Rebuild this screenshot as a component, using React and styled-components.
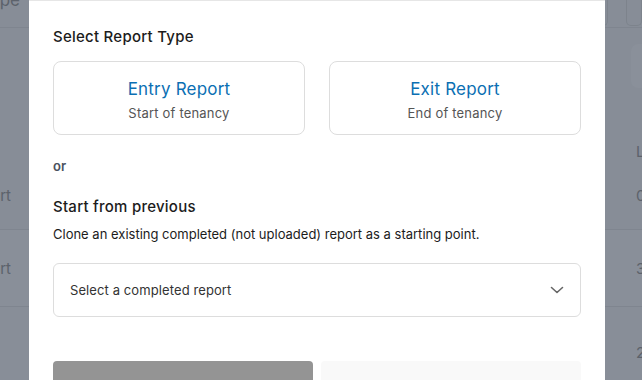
import React from 'react';
import styled, { createGlobalStyle } from 'styled-components';

const Global = createGlobalStyle`
  html, body { margin: 0; padding: 0; }
  body {
    font-family: Inter, "Noto Sans", "Liberation Sans", sans-serif;
    width: 642px;
    height: 380px;
    overflow: hidden;
    background: #878d97;
  }
`;

/* dimmed page behind the dialog */
const Page = styled.div`
  width: 642px;
  height: 380px;
  display: flex;
  flex-direction: column;
  background: #878d97;
  color: #5c626b;
  font-size: 15px;
`;

const Row = styled.div`
  height: ${p => p.h}px;
  display: flex;
  justify-content: space-between;
  align-items: ${p => p.align || 'center'};
  border-bottom: ${p => (p.line ? '1px solid #7f858f' : 'none')};
  background: ${p => p.bg || 'transparent'};
  flex-shrink: 0;
`;

const LeftCell = styled.div`
  width: ${p => p.w || 11}px;
  margin-top: ${p => p.mt || 0}px;
  font-size: ${p => p.fs || 15}px;
  display: flex;
  justify-content: flex-end;
  overflow: hidden;
  white-space: nowrap;
`;

const RightCell = styled.div`
  width: 6px;
  overflow: hidden;
  white-space: nowrap;
`;

const TopBoxes = styled.div`
  display: flex;
  gap: 18px;
  align-self: flex-start;
`;

const TopBox = styled.div`
  width: ${p => p.w}px;
  height: 25px;
  border: 1px solid #7d838c;
  border-top: none;
  border-radius: 0 0 5px 5px;
`;

const Pill = styled.div`
  width: 11px;
  height: 44px;
  margin-top: 16px;
  border-radius: 7px 0 0 7px;
  background: #8a909a;
`;

/* dialog */
const Modal = styled.div`
  position: fixed;
  top: 0;
  left: 29px;
  width: 576px;
  height: 400px;
  background: #ffffff;
  border-top: 1px solid #e6e6e6;
  box-sizing: border-box;
  padding: 26px 24px 0;
  display: flex;
  flex-direction: column;
  & > * { flex-shrink: 0; }
`;

const Heading = styled.h2`
  margin: 0;
  font-size: 15px;
  line-height: 20px;
  font-weight: 500;
  letter-spacing: 0.25px;
  color: #1c1c1c;
  margin-top: ${p => p.mt || 0}px;
`;

const Cards = styled.div`
  display: grid;
  grid-template-columns: 1fr 1fr;
  gap: 24px;
  margin-top: 14px;
`;

const Card = styled.button`
  all: unset;
  box-sizing: border-box;
  height: 74px;
  border: 1px solid #dddddd;
  border-radius: 8px;
  display: flex;
  flex-direction: column;
  align-items: center;
  padding-top: 16px;
  gap: 4px;
  cursor: pointer;
`;

const CardTitle = styled.span`
  font-size: 17px;
  line-height: 22px;
  letter-spacing: 0.2px;
  color: #0b6fb3;
`;

const CardSub = styled.span`
  font-size: 13px;
  line-height: 18px;
  letter-spacing: 0.2px;
  color: #555555;
`;

const Or = styled.div`
  margin-top: 22px;
  font-size: 13px;
  line-height: 18px;
  font-weight: 600;
  color: #4a5160;
`;

const Hint = styled.p`
  margin: 8px 0 0;
  font-size: 13px;
  line-height: 18px;
  color: #1c1c1c;
`;

const Select = styled.div`
  margin-top: 20px;
  height: 54px;
  box-sizing: border-box;
  border: 1px solid #dddddd;
  border-radius: 6px;
  padding: 0 16px;
  display: flex;
  align-items: center;
  justify-content: space-between;
  font-size: 13px;
  letter-spacing: 0.1px;
  color: #333333;
`;

const Actions = styled.div`
  margin-top: 44px;
  display: grid;
  grid-template-columns: 1fr 1fr;
  gap: 8px;
`;

const Btn = styled.div`
  height: 40px;
  border-radius: 4px;
  background: ${p => (p.primary ? '#949494' : '#f9f9f9')};
`;

const Chevron = () => (
  <svg width="14" height="8" viewBox="0 0 14 8" fill="none">
    <polyline points="1.5,1.5 7,6.5 12.5,1.5" stroke="#666" strokeWidth="1.6" strokeLinecap="round" strokeLinejoin="round" />
  </svg>
);

export default function App() {
  return (
    <>
      <Global />
      <Page>
        <Row h={27} line align="flex-start">
          <LeftCell w={20} mt={-10} fs={17}>Type</LeftCell>
          <TopBoxes>
            <TopBox w={14} />
            <TopBox w={14} />
          </TopBoxes>
        </Row>
        <Row h={112} align="flex-start">
          <LeftCell />
          <Pill />
        </Row>
        <Row h={22}>
          <LeftCell />
          <RightCell>L</RightCell>
        </Row>
        <Row h={67} line>
          <LeftCell>Report</LeftCell>
          <RightCell>0</RightCell>
        </Row>
        <Row h={76} line bg="#898f99">
          <LeftCell>Report</LeftCell>
          <RightCell>3</RightCell>
        </Row>
        <Row h={90} bg="#888e98">
          <LeftCell />
          <RightCell>2</RightCell>
        </Row>
      </Page>
      <Modal>
        <Heading>Select Report Type</Heading>
        <Cards>
          <Card>
            <CardTitle>Entry Report</CardTitle>
            <CardSub>Start of tenancy</CardSub>
          </Card>
          <Card>
            <CardTitle>Exit Report</CardTitle>
            <CardSub>End of tenancy</CardSub>
          </Card>
        </Cards>
        <Or>or</Or>
        <Heading mt={22}>Start from previous</Heading>
        <Hint>Clone an existing completed (not uploaded) report as a starting point.</Hint>
        <Select>
          <span>Select a completed report</span>
          <Chevron />
        </Select>
        <Actions>
          <Btn primary />
          <Btn />
        </Actions>
      </Modal>
    </>
  );
}
